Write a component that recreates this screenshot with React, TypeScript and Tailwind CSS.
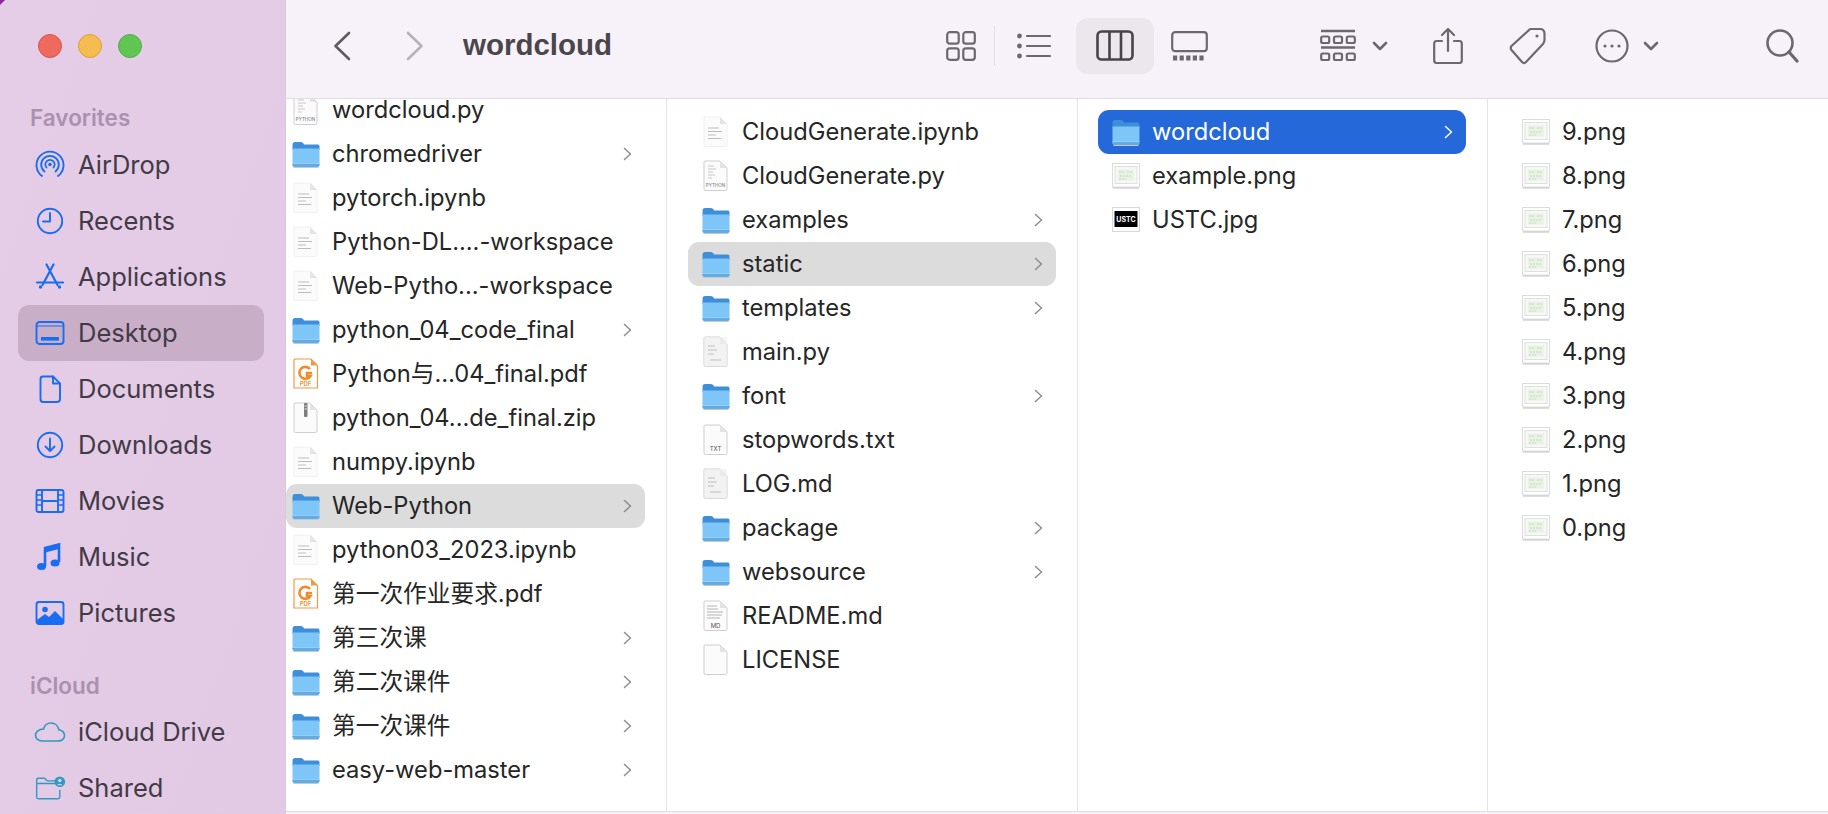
import type { ReactNode } from 'react';

const FONT = { fontFamily: 'Inter' };

type IconKind = 'folder' | 'doc' | 'py' | 'pdf' | 'zip' | 'txt' | 'log' | 'md' | 'blank' | 'png' | 'jpg';

type Entry = {
  name: string;
  icon: IconKind;
  dir?: boolean;
  state?: 'gray' | 'blue';
};

const col1: Entry[] = [
  { name: 'wordcloud.py', icon: 'py' },
  { name: 'chromedriver', icon: 'folder', dir: true },
  { name: 'pytorch.ipynb', icon: 'doc' },
  { name: 'Python-DL....-workspace', icon: 'doc' },
  { name: 'Web-Pytho...-workspace', icon: 'doc' },
  { name: 'python_04_code_final', icon: 'folder', dir: true },
  { name: 'Python与…04_final.pdf', icon: 'pdf' },
  { name: 'python_04...de_final.zip', icon: 'zip' },
  { name: 'numpy.ipynb', icon: 'doc' },
  { name: 'Web-Python', icon: 'folder', dir: true, state: 'gray' },
  { name: 'python03_2023.ipynb', icon: 'doc' },
  { name: '第一次作业要求.pdf', icon: 'pdf' },
  { name: '第三次课', icon: 'folder', dir: true },
  { name: '第二次课件', icon: 'folder', dir: true },
  { name: '第一次课件', icon: 'folder', dir: true },
  { name: 'easy-web-master', icon: 'folder', dir: true },
];

const col2: Entry[] = [
  { name: 'CloudGenerate.ipynb', icon: 'doc' },
  { name: 'CloudGenerate.py', icon: 'py' },
  { name: 'examples', icon: 'folder', dir: true },
  { name: 'static', icon: 'folder', dir: true, state: 'gray' },
  { name: 'templates', icon: 'folder', dir: true },
  { name: 'main.py', icon: 'log' },
  { name: 'font', icon: 'folder', dir: true },
  { name: 'stopwords.txt', icon: 'txt' },
  { name: 'LOG.md', icon: 'log' },
  { name: 'package', icon: 'folder', dir: true },
  { name: 'websource', icon: 'folder', dir: true },
  { name: 'README.md', icon: 'md' },
  { name: 'LICENSE', icon: 'blank' },
];

const col3: Entry[] = [
  { name: 'wordcloud', icon: 'folder', dir: true, state: 'blue' },
  { name: 'example.png', icon: 'png' },
  { name: 'USTC.jpg', icon: 'jpg' },
];

const col4: Entry[] = ['9', '8', '7', '6', '5', '4', '3', '2', '1', '0'].map((n) => ({
  name: `${n}.png`,
  icon: 'png' as IconKind,
}));

function FolderIcon() {
  return (
    <svg width="28" height="27" viewBox="0 0 28 27">
      <path d="M0.5 4 Q0.5 1 3 1 H9 Q10.5 1 11.5 2.5 L12 3.5 H26 Q27.5 3.5 27.5 5.5 V9 H0.5 Z" fill="#3f8fd8" />
      <path d="M0.5 7.5 H27.5 V24 Q27.5 26 25.5 26 H2.5 Q0.5 26 0.5 24 Z" fill="#7fc6f8" />
      <path d="M0.5 23 H27.5 V24 Q27.5 26 25.5 26 H2.5 Q0.5 26 0.5 24 Z" fill="#62ace4" />
      <path d="M0.5 22.5 H27.5" stroke="#9dd3f8" strokeWidth="0.6" />
      <path d="M1.5 26.5 H26.5" stroke="#c6c9cc" strokeWidth="1" />
    </svg>
  );
}

function Page({ children, shadow = true }: { children?: ReactNode; shadow?: boolean }) {
  return (
    <svg width="26" height="32" viewBox="0 0 26 32">
      <path d="M2 1 H17 L24 8 V29 Q24 30.5 22.5 30.5 H2.5 Q1 30.5 1 29 V2 Q1 1 2 1 Z" fill="#fbfbfb" stroke={shadow ? '#cfcfcf' : '#f0f0f0'} strokeWidth="1" />
      <path d="M17 1 V8 H24 Z" fill="#e4e4e4" />
      {children}
    </svg>
  );
}

function FileIcon({ kind }: { kind: IconKind }) {
  if (kind === 'folder') return <FolderIcon />;
  if (kind === 'doc')
    return (
      <Page shadow={false}>
        <path d="M5 12 H16 M5 15.5 H19 M5 19 H13 M5 22.5 H18" stroke="#bdbdbd" strokeWidth="1.2" />
      </Page>
    );
  if (kind === 'py')
    return (
      <Page>
        <path d="M5 6 H11 M5 9 H13 M5 12 H10 M5 15 H12 M5 18 H9" stroke="#c8c8c8" strokeWidth="1" />
        <text x="12.5" y="27" textAnchor="middle" fontSize="4.6" fill="#777" fontFamily="Inter">PYTHON</text>
      </Page>
    );
  if (kind === 'log')
    return (
      <Page>
        <rect x="1" y="1" width="23" height="29.5" rx="2" fill="#eeeeee" opacity="0.7" />
        <path d="M5 10 H12 M5 14 H14 M5 18 H11 M7 24 H18" stroke="#d0d0d0" strokeWidth="1.4" />
      </Page>
    );
  if (kind === 'txt')
    return (
      <Page>
        <text x="12.5" y="27" textAnchor="middle" fontSize="6" fill="#555" fontFamily="Inter">TXT</text>
      </Page>
    );
  if (kind === 'md')
    return (
      <Page>
        <path d="M4 6 H14 M4 9 H15 M4 12 H20 M4 15 H19 M4 18 H17" stroke="#b4b4b4" strokeWidth="1" />
        <text x="12.5" y="27.5" textAnchor="middle" fontSize="6" fill="#555" fontFamily="Inter">MD</text>
      </Page>
    );
  if (kind === 'blank') return <Page />;
  if (kind === 'zip')
    return (
      <Page>
        <rect x="11" y="1" width="3.5" height="14" rx="1" fill="#7d7d7d" />
        <path d="M11.5 4 H14 M11.5 7 H14" stroke="#ddd" strokeWidth="1" />
      </Page>
    );
  if (kind === 'pdf')
    return (
      <svg width="26" height="32" viewBox="0 0 26 32">
        <path d="M2 1 H18 L24.5 7.5 V30 H1 V2 Z" fill="#ffffff" stroke="#f09a45" strokeWidth="1.2" />
        <path d="M18 1 V7.5 H24.5 Z" fill="#f09a45" />
        <path d="M17 11 A6 6 0 1 0 17.5 18 L14 18 L14 15 H19" fill="none" stroke="#f08a2c" strokeWidth="2.6" />
        <text x="12.5" y="27.5" textAnchor="middle" fontSize="6" fontWeight="700" fill="#f09a45" fontFamily="Inter">PDF</text>
      </svg>
    );
  if (kind === 'jpg')
    return (
      <svg width="28" height="26" viewBox="0 0 28 26">
        <rect x="0.5" y="0.5" width="27" height="24" fill="#fff" stroke="#d8d8d8" />
        <rect x="2.5" y="4" width="23" height="16" fill="#000" />
        <text x="14" y="15" textAnchor="middle" fontSize="7" fontWeight="700" fill="#fff" fontFamily="Inter">USTC</text>
      </svg>
    );
  return (
    <svg width="28" height="26" viewBox="0 0 28 26">
      <rect x="0.5" y="0.5" width="27" height="23.5" fill="#fff" stroke="#dcdcdc" />
      <rect x="3" y="3.5" width="22" height="17" fill="#f6f8f3" stroke="#e0e0e0" />
      <rect x="6" y="6.5" width="16" height="11" fill="#e6f0de" opacity="0.8" />
      <path d="M7 9 H12 M15 9 H21 M8 13 H20 M7 16 H14" stroke="#bcd8c4" strokeWidth="1.2" strokeDasharray="2 1" />
      <path d="M1 25 H27" stroke="#bdbdbd" strokeWidth="1" />
    </svg>
  );
}

function Row({ entry, inset }: { entry: Entry; inset: string }) {
  const bg =
    entry.state === 'gray' ? 'bg-[#dcdcdc]' : entry.state === 'blue' ? 'bg-[#2468d9]' : '';
  return (
    <div className={`flex h-[44px] items-center rounded-[11px] pr-[13px] ${inset} ${bg}`}>
      <span className="flex w-[28px] shrink-0 justify-center">
        <FileIcon kind={entry.icon} />
      </span>
      <span
        className={`ml-[12px] flex-1 whitespace-nowrap text-[23.7px] ${entry.state === 'blue' ? 'text-white' : 'text-[#262626]'}`}
        style={{ fontFamily: 'Inter, "Noto Sans CJK SC", sans-serif' }}
      >
        {entry.name}
      </span>
      {entry.dir && (
        <svg width="9" height="14" viewBox="0 0 9 14" className="shrink-0">
          <path
            d="M1.5 1.5 L7.5 7 L1.5 12.5"
            fill="none"
            stroke={entry.state === 'blue' ? '#ffffff' : '#8c8c8c'}
            strokeWidth="1.5"
            strokeLinecap="round"
            strokeLinejoin="round"
          />
        </svg>
      )}
    </div>
  );
}

const blue = '#1a6cf0';
const teal = '#2f9ac0';

function SideIcon({ name }: { name: string }) {
  const p = { fill: 'none', stroke: blue, strokeWidth: 1.9, strokeLinecap: 'round' as const, strokeLinejoin: 'round' as const };
  switch (name) {
    case 'AirDrop':
      return (
        <svg width="30" height="30" viewBox="0 0 30 30">
          <path {...p} d="M7 26 A13.5 13.5 0 1 1 23 26" />
          <path {...p} d="M9.5 21.5 A8.8 8.8 0 1 1 20.5 21.5" />
          <path {...p} d="M11.5 17.5 A4.6 4.6 0 1 1 18.5 17.5" />
          <circle cx="15" cy="14.5" r="1.8" fill={blue} />
        </svg>
      );
    case 'Recents':
      return (
        <svg width="30" height="30" viewBox="0 0 30 30">
          <circle {...p} cx="15" cy="15" r="12.2" />
          <path {...p} d="M15 7 V15.5 H8" />
        </svg>
      );
    case 'Applications':
      return (
        <svg width="30" height="30" viewBox="0 0 30 30">
          <path {...p} strokeWidth="2.2" d="M11.5 2.5 L22.5 23 M18.5 2.5 L7.5 23" />
          <path {...p} strokeWidth="2.2" d="M2 20.5 H28" />
          <circle cx="5.5" cy="25" r="1.7" fill={blue} />
          <circle cx="24.5" cy="25" r="1.7" fill={blue} />
        </svg>
      );
    case 'Desktop':
      return (
        <svg width="30" height="30" viewBox="0 0 30 30">
          <rect {...p} x="1.5" y="4" width="27" height="22" rx="3" />
          <path {...p} d="M2 8 H28" strokeWidth="1.2" />
          <rect x="6" y="19" width="18" height="3.6" fill={blue} />
        </svg>
      );
    case 'Documents':
      return (
        <svg width="30" height="30" viewBox="0 0 30 30">
          <path {...p} d="M8 2.5 H18 L25 9.5 V25 Q25 28 22 28 H8 Q5.5 28 5.5 25 V5 Q5.5 2.5 8 2.5 Z" />
          <path {...p} d="M18 2.5 V9.5 H25" />
        </svg>
      );
    case 'Downloads':
      return (
        <svg width="30" height="30" viewBox="0 0 30 30">
          <circle {...p} cx="15" cy="15" r="12.2" />
          <path {...p} d="M15 8.5 V21 M10.5 16.5 L15 21 L19.5 16.5" />
        </svg>
      );
    case 'Movies':
      return (
        <svg width="30" height="30" viewBox="0 0 30 30">
          <rect {...p} x="1.5" y="4" width="27" height="22" rx="2" />
          <path {...p} d="M7 4 V26 M23 4 V26 M7 15 H23" />
          <path d="M2 9 H7 M2 14 H7 M2 19 H7 M23 9 H28 M23 14 H28 M23 19 H28" stroke={blue} strokeWidth="1.5" />
        </svg>
      );
    case 'Music':
      return (
        <svg width="30" height="30" viewBox="0 0 30 30">
          <path d="M10 24 V6 L24 2.5 V20" fill="none" stroke={blue} strokeWidth="2.6" />
          <ellipse cx="6.5" cy="24.5" rx="4.5" ry="3.6" fill={blue} />
          <ellipse cx="20" cy="21" rx="4.5" ry="3.6" fill={blue} />
          <path d="M10 6 L24 2.5 V7 L10 10.5 Z" fill={blue} />
        </svg>
      );
    case 'Pictures':
      return (
        <svg width="30" height="30" viewBox="0 0 30 30">
          <rect {...p} x="1.5" y="4" width="27" height="22" rx="2.5" />
          <circle cx="10" cy="11.5" r="2.8" fill={blue} />
          <path d="M2 22 L10 16 L14 19 L20 13 L28 21 V25 Q28 26 26.5 26 H3.5 Q2 26 2 25 Z" fill={blue} />
        </svg>
      );
    case 'iCloud Drive':
      return (
        <svg width="32" height="30" viewBox="0 0 32 30">
          <path
            d="M8 24 H24.5 C28 24 30.5 21.5 30.5 18.5 C30.5 15.5 28 13 25 13 C24 8.5 20.5 6 17 6 C13 6 10.5 8.5 9.5 12 C5 12 1.5 15 1.5 18.5 C1.5 21.5 4.5 24 8 24 Z"
            fill="none"
            stroke={teal}
            strokeWidth="1.6"
          />
        </svg>
      );
    default:
      return (
        <svg width="36" height="30" viewBox="0 0 36 30">
          <path
            d="M3 10 V6 Q3 4 5 4 H12 L15 7 H24 M3 10 H24 M3 10 V25 Q3 27 5 27 H27 Q29 27 29 25 V17"
            fill="none"
            stroke={teal}
            strokeWidth="1.6"
          />
          <circle cx="29" cy="8" r="6" fill={teal} />
          <circle cx="29" cy="6.5" r="2" fill="#e4cbe6" />
          <path d="M25.5 12 Q29 8.5 32.5 12 Z" fill="#e4cbe6" />
        </svg>
      );
  }
}

function SideItem({ label, active }: { label: string; active?: boolean }) {
  return (
    <div className={`ml-[18px] mr-[21px] flex h-[56px] shrink-0 items-center rounded-[11px] pl-[16px] ${active ? 'bg-[#c9aec8]' : ''}`}>
      <span className="flex w-[32px] shrink-0 justify-center">
        <SideIcon name={label} />
      </span>
      <span className="ml-[12px] whitespace-nowrap text-[25.5px] text-[#423a45]" style={FONT}>
        {label}
      </span>
    </div>
  );
}

function Sidebar() {
  return (
    <aside className="relative flex h-full w-[286px] shrink-0 flex-col overflow-hidden border-r border-[#d9c8dc] bg-linear-to-br from-[#e6cde7] to-[#e2c9e4]">
      <span className="absolute -left-[6px] -top-[6px] h-[10px] w-[10px] rotate-45 bg-[#8a2a96]" />
      <div className="mb-[1px] flex h-[92px] shrink-0 items-center gap-[16px] pl-[38px]">
        <span className="h-[24px] w-[24px] rounded-full border border-[#d9534a] bg-[#ee6a5f]" />
        <span className="h-[24px] w-[24px] rounded-full border border-[#dca030] bg-[#f5bd4f]" />
        <span className="h-[24px] w-[24px] rounded-full border border-[#4fae46] bg-[#61c554]" />
      </div>
      <div className="ml-[30px] flex h-[44px] shrink-0 items-center pt-[6px] text-[22.5px] font-semibold text-[#a892ad]" style={FONT}>
        Favorites
      </div>
      {['AirDrop', 'Recents', 'Applications', 'Desktop', 'Documents', 'Downloads', 'Movies', 'Music', 'Pictures'].map((l) => (
        <SideItem key={l} label={l} active={l === 'Desktop'} />
      ))}
      <div className="ml-[30px] mt-[27px] flex h-[36px] shrink-0 items-center text-[22.5px] font-semibold text-[#a892ad]" style={FONT}>
        iCloud
      </div>
      {['iCloud Drive', 'Shared'].map((l) => (
        <SideItem key={l} label={l} />
      ))}
    </aside>
  );
}

const ink = '#6d686f';

function ToolGlyph({ w, h, className, children }: { w: number; h: number; className: string; children: ReactNode }) {
  return (
    <svg width={w} height={h} viewBox={`0 0 ${w} ${h}`} className={`shrink-0 ${className}`} fill="none" stroke={ink} strokeWidth="2.2" strokeLinecap="round" strokeLinejoin="round">
      {children}
    </svg>
  );
}

function Toolbar() {
  return (
    <header className="flex h-[98px] shrink-0 items-center bg-[#f7f2f9] pb-[7px]">
      <svg width="18" height="30" viewBox="0 0 18 30" className="ml-[47px] shrink-0" fill="none" stroke="#5e5a60" strokeWidth="2.6" strokeLinecap="round" strokeLinejoin="round">
        <path d="M16 2 L2.5 15 L16 28" />
      </svg>
      <svg width="18" height="30" viewBox="0 0 18 30" className="ml-[55px] shrink-0" fill="none" stroke="#b6b2b8" strokeWidth="2.6" strokeLinecap="round" strokeLinejoin="round">
        <path d="M2 2 L15.5 15 L2 28" />
      </svg>
      <h1 className="ml-[39px] w-[150px] whitespace-nowrap text-[29.5px] font-bold text-[#4a464c]" style={{ fontFamily: '"Liberation Sans", sans-serif' }}>
        wordcloud
      </h1>
      <ToolGlyph w={30} h={30} className="ml-[333px]">
        <rect x="1.2" y="1.2" width="11.5" height="11.5" rx="2.5" />
        <rect x="17.3" y="1.2" width="11.5" height="11.5" rx="2.5" />
        <rect x="1.2" y="17.3" width="11.5" height="11.5" rx="2.5" />
        <rect x="17.3" y="17.3" width="11.5" height="11.5" rx="2.5" />
      </ToolGlyph>
      <span className="ml-[18px] h-[40px] w-px shrink-0 bg-[#e4dfe6]" />
      <ToolGlyph w={34} h={26} className="ml-[22px]">
        <circle cx="2.5" cy="3" r="1.3" fill={ink} />
        <circle cx="2.5" cy="13" r="1.3" fill={ink} />
        <circle cx="2.5" cy="23" r="1.3" fill={ink} />
        <path d="M10 3 H33 M10 13 H33 M10 23 H33" />
      </ToolGlyph>
      <span className="ml-[25px] flex h-[56px] w-[78px] shrink-0 items-center justify-center rounded-[12px] bg-[#ece7ed]">
        <svg width="38" height="31" viewBox="0 0 38 31" fill="none" stroke="#47434a" strokeWidth="2.6">
          <rect x="1.5" y="1.5" width="35" height="28" rx="4" />
          <path d="M13.5 1.5 V29.5 M25 1.5 V29.5" />
        </svg>
      </span>
      <ToolGlyph w={37} h={30} className="ml-[17px]">
        <rect x="1.2" y="1.2" width="34.6" height="19" rx="3" />
        <path d="M2 27 H35" strokeWidth="5" strokeDasharray="4.2 2.4" strokeLinecap="butt" />
      </ToolGlyph>
      <ToolGlyph w={36} h={34} className="ml-[112px]">
        <path d="M1 2 H35 M1 18.5 H35" strokeWidth="2.6" strokeLinecap="butt" />
        <rect x="1.2" y="7.5" width="8" height="6.5" rx="1.5" />
        <rect x="14" y="7.5" width="8" height="6.5" rx="1.5" />
        <rect x="26.8" y="7.5" width="8" height="6.5" rx="1.5" />
        <rect x="1.2" y="24.5" width="8" height="6.5" rx="1.5" />
        <rect x="14" y="24.5" width="8" height="6.5" rx="1.5" />
        <rect x="26.8" y="24.5" width="8" height="6.5" rx="1.5" />
      </ToolGlyph>
      <ToolGlyph w={16} h={10} className="ml-[16px]">
        <path d="M2 2 L8 8 L14 2" strokeWidth="2.6" />
      </ToolGlyph>
      <ToolGlyph w={30} h={38} className="ml-[45px]">
        <path d="M9 14 H3.5 Q1.2 14 1.2 16.5 V33.5 Q1.2 36 3.5 36 H26.5 Q28.8 36 28.8 33.5 V16.5 Q28.8 14 26.5 14 H21" />
        <path d="M15 24 V2 M9 8 L15 2 L21 8" />
      </ToolGlyph>
      <ToolGlyph w={37} h={38} className="ml-[46px]">
        <path d="M22 2 H31 Q35 2 35.5 6 V13 Q35.5 15 34 17 L17 35 Q15 37 13 35 L2.5 23 Q1 21 2.5 19 L19 4 Q20.5 2 22 2 Z" />
        <circle cx="28" cy="9" r="1.6" fill={ink} stroke="none" />
      </ToolGlyph>
      <ToolGlyph w={34} h={34} className="ml-[49px]">
        <circle cx="17" cy="17" r="15.5" />
        <circle cx="10" cy="17" r="1.6" fill={ink} stroke="none" />
        <circle cx="17" cy="17" r="1.6" fill={ink} stroke="none" />
        <circle cx="24" cy="17" r="1.6" fill={ink} stroke="none" />
      </ToolGlyph>
      <ToolGlyph w={16} h={10} className="ml-[14px]">
        <path d="M2 2 L8 8 L14 2" strokeWidth="2.6" />
      </ToolGlyph>
      <ToolGlyph w={33} h={34} className="ml-[107px]">
        <circle cx="14" cy="14" r="12.5" strokeWidth="2.6" />
        <path d="M23 23 L31 32" strokeWidth="3.2" />
      </ToolGlyph>
    </header>
  );
}

export default function App() {
  return (
    <div className="flex h-[814px] w-[1828px] overflow-hidden bg-white">
      <Sidebar />
      <main className="flex min-w-0 flex-1 flex-col bg-[#f7f2f9]">
        <Toolbar />
        <div className="flex h-[714px] border-y border-[#e2dce4] bg-white">
          <section className="w-[381px] shrink-0 overflow-hidden border-r border-[#e3e3e3]">
            <div className="-mt-[11px]">
              {col1.map((e) => (
                <Row key={e.name} entry={e} inset="ml-0 mr-[21px] pl-[6px]" />
              ))}
            </div>
          </section>
          <section className="w-[411px] shrink-0 overflow-hidden border-r border-[#e3e3e3] pt-[11px]">
            {col2.map((e) => (
              <Row key={e.name} entry={e} inset="mx-[21px] pl-[14px]" />
            ))}
          </section>
          <section className="w-[410px] shrink-0 overflow-hidden border-r border-[#e3e3e3] pt-[11px]">
            {col3.map((e) => (
              <Row key={e.name} entry={e} inset="ml-[20px] mr-[21px] pl-[14px]" />
            ))}
          </section>
          <section className="flex-1 overflow-hidden pt-[11px]">
            {col4.map((e) => (
              <Row key={e.name} entry={e} inset="ml-[21px] mr-[21px] pl-[13px]" />
            ))}
          </section>
        </div>
      </main>
    </div>
  );
}
